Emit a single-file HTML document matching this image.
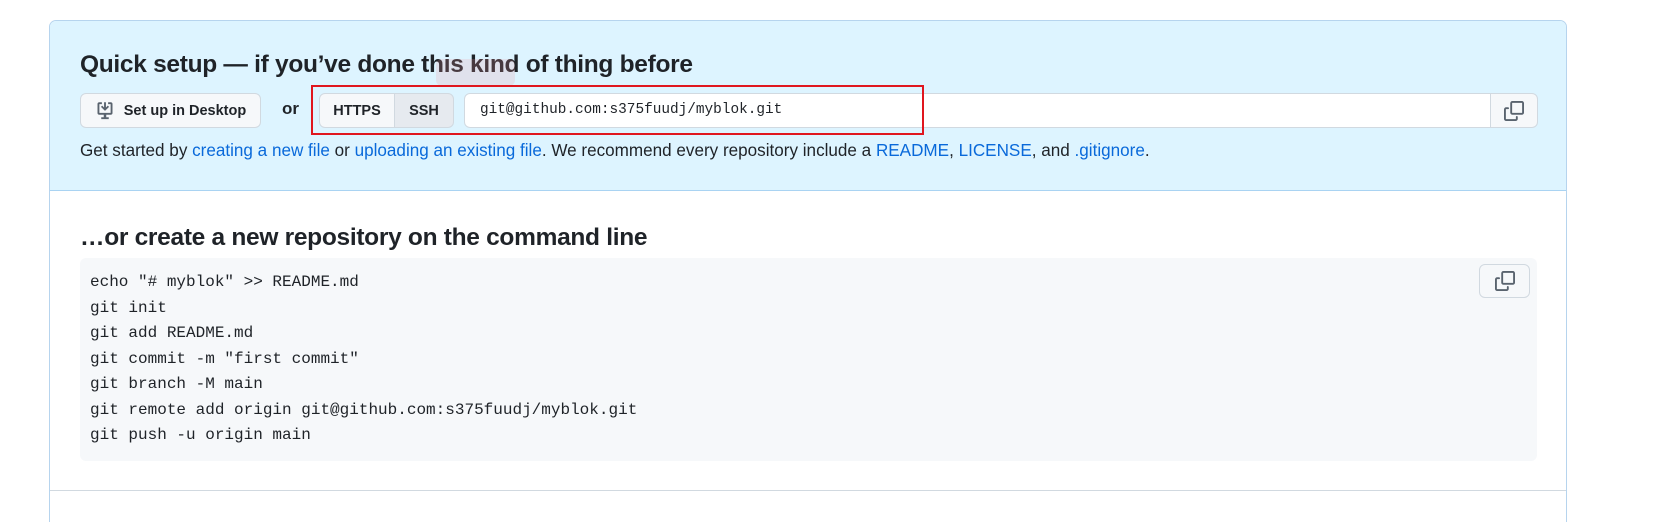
<!DOCTYPE html>
<html style="overflow:hidden;height:522px"><head><meta charset="utf-8"><style>
*{box-sizing:border-box;margin:0;padding:0}
body{width:1663px;height:522px;background:#fff;font-family:"Liberation Sans",sans-serif;color:#1f2328;position:relative;overflow:hidden}
.box{position:absolute;left:49px;top:20px;width:1518px;height:512px;border:1px solid #b6d4ee;border-radius:7px;overflow:hidden}
.blue{position:absolute;left:0;top:0;right:0;height:170px;background:#ddf4ff;border-bottom:1px solid #a9d3f2}
.abs{position:absolute}
h3{position:absolute;font-size:24.5px;font-weight:bold;white-space:nowrap;letter-spacing:-0.3px}
.btn{position:absolute;background:#f6f8fa;border:1px solid #d1d9e0;border-radius:6px;font-size:14.5px;font-weight:bold;display:flex;align-items:center;justify-content:center}
.mono{font-family:"Liberation Mono",monospace}
a{color:#0969da;text-decoration:none}
.code{position:absolute;left:30px;top:237px;width:1457px;height:203px;background:#f6f8fa;border-radius:6px}
.code pre{position:absolute;left:10px;top:12px;font-family:"Liberation Mono",monospace;font-size:16px;line-height:25.5px;color:#1f2328}
</style></head><body>
<div class="box">
 <div class="blue"></div>
 <div class="abs" style="left:0;right:0;top:469px;border-top:1px solid #d1d9e0"></div>
 <h3 style="left:30px;top:30px">Quick setup — if you’ve done this kind of thing before</h3>
 <div class="abs" style="left:386px;top:38px;width:79px;height:27px;background:rgba(240,150,160,0.2);border-radius:6px"></div>
 <div class="btn" style="left:30px;top:72px;width:181px;height:35px;font-weight:normal;color:#1f2328">
  <svg width="20" height="20" viewBox="0 0 16 16" style="margin-right:9px" fill="#59636e"><path d="M2 2.5A1.5 1.5 0 0 1 3.5 1h2v1.5h-2v7h9v-7h-2V1h2A1.5 1.5 0 0 1 14 2.5v7A1.5 1.5 0 0 1 12.5 11H9v2h2v1.5H5V13h2v-2H3.5A1.5 1.5 0 0 1 2 9.5Z"/><path d="M8.75 1v4.2l1.5-1.5 1 1L8 7.9 4.75 4.7l1-1 1.5 1.5V1Z"/></svg>
  <span style="font-weight:bold;font-size:14.5px">Set up in Desktop</span></div>
 <div class="abs" style="left:232px;top:78px;font-size:17px;font-weight:bold">or</div>
 <div class="btn" style="left:269px;top:72px;width:76px;height:35px;border-radius:6px 0 0 6px;background:#f6f8fa">HTTPS</div>
 <div class="btn" style="left:344px;top:72px;width:60px;height:35px;border-radius:0 6px 6px 0;background:#e6eaef">SSH</div>
 <div class="abs" style="left:414px;top:72px;width:1027px;height:35px;background:#fff;border:1px solid #d1d9e0;border-radius:6px 0 0 6px"></div>
 <div class="abs mono" style="left:430px;top:81px;font-size:14.4px">git@github.com:s375fuudj/myblok.git</div>
 <div class="btn" style="left:1440px;top:72px;width:48px;height:35px;border-radius:0 6px 6px 0">
  <svg width="20" height="20" viewBox="0 0 16 16" fill="#59636e"><path d="M0 6.75C0 5.784.784 5 1.750 5h1.5a.75.75 0 0 1 0 1.5h-1.5a.25.25 0 0 0-.25.25v7.5c0 .138.112.25.25.25h7.5a.25.25 0 0 0 .25-.25v-1.5a.75.75 0 0 1 1.5 0v1.5A1.75 1.75 0 0 1 9.25 16h-7.5A1.75 1.75 0 0 1 0 14.25Z"/><path d="M5 1.75C5 .784 5.784 0 6.75 0h7.5C15.216 0 16 .784 16 1.75v7.5A1.75 1.75 0 0 1 14.25 11h-7.5A1.75 1.75 0 0 1 5 9.25Zm1.75-.25a.25.25 0 0 0-.25.25v7.5c0 .138.112.25.25.25h7.5a.25.25 0 0 0 .25-.25v-7.5a.25.25 0 0 0-.25-.25Z"/></svg></div>
 <div class="abs" style="left:261px;top:64px;width:613px;height:50px;border:2px solid #e0161e"></div>
 <div class="abs" style="left:30px;top:120px;font-size:17.1px;white-space:nowrap">Get started by <a>creating a new file</a> or <a>uploading an existing file</a>. We recommend every repository include a <a>README</a>, <a>LICENSE</a>, and <a>.gitignore</a>.</div>
 <h3 style="left:30px;top:203px">…or create a new repository on the command line</h3>
 <div class="code"><pre>echo "# myblok" &gt;&gt; README.md
git init
git add README.md
git commit -m "first commit"
git branch -M main
git remote add origin git@github.com:s375fuudj/myblok.git
git push -u origin main</pre>
  <div class="btn" style="left:1399px;top:6px;width:51px;height:34px">
  <svg width="20" height="20" viewBox="0 0 16 16" fill="#59636e"><path d="M0 6.75C0 5.784.784 5 1.75 5h1.5a.75.75 0 0 1 0 1.5h-1.5a.25.25 0 0 0-.25.25v7.5c0 .138.112.25.25.25h7.5a.25.25 0 0 0 .25-.25v-1.5a.75.75 0 0 1 1.5 0v1.5A1.75 1.75 0 0 1 9.25 16h-7.5A1.75 1.75 0 0 1 0 14.25Z"/><path d="M5 1.75C5 .784 5.784 0 6.75 0h7.5C15.216 0 16 .784 16 1.75v7.5A1.75 1.75 0 0 1 14.25 11h-7.5A1.75 1.75 0 0 1 5 9.25Zm1.75-.25a.25.25 0 0 0-.25.25v7.5c0 .138.112.25.25.25h7.5a.25.25 0 0 0 .25-.25v-7.5a.25.25 0 0 0-.25-.25Z"/></svg></div>
 </div>
</div>
</body></html>
